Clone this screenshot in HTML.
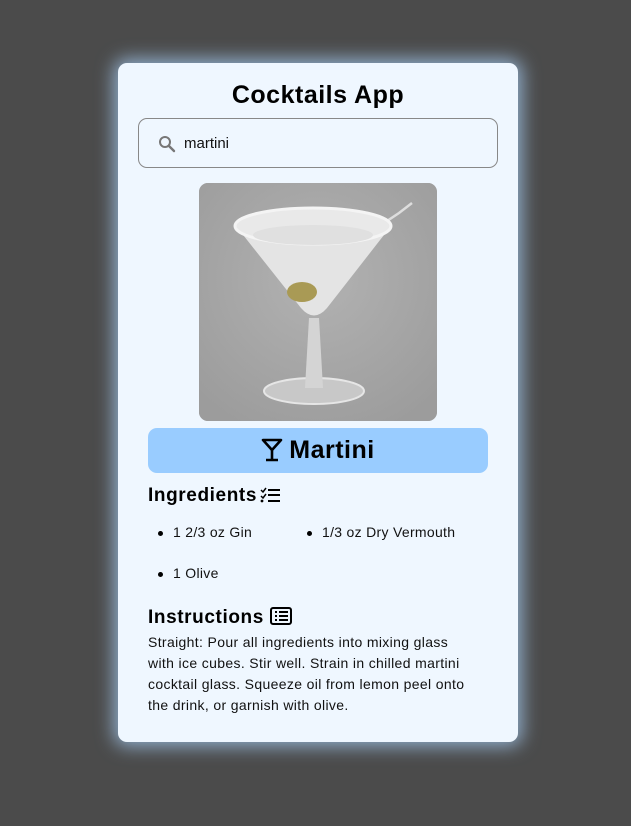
<!DOCTYPE html>
<html><head><style>
html,body{margin:0;width:631px;height:826px;background:#4b4b4b;overflow:hidden;font-family:"Liberation Sans",sans-serif}
.card{position:absolute;left:118px;top:63px;width:400px;height:679px;background:#eff7ff;border-radius:9px;box-shadow:0 0 18px 4px rgba(170,210,250,.75)}
h1{margin:0;position:absolute;top:18px;width:100%;text-align:center;font-size:25px;font-weight:bold;color:#000;letter-spacing:0.5px}
.search{position:absolute;left:20px;top:55px;width:360px;height:50px;border:1px solid #888;border-radius:9px;box-sizing:border-box}
.search span{position:absolute;left:45px;top:16px;font-size:15px;color:#111}
.img{position:absolute;left:81px;top:120px;width:238px;height:238px;border-radius:9px;overflow:hidden;background:#a9a9a9}
.title{position:absolute;left:30px;top:365px;width:340px;height:45px;background:#99ccff;border-radius:9px;text-align:center;font-size:25px;font-weight:bold;line-height:45px;letter-spacing:0.5px}
h2{position:absolute;margin:0;left:30px;font-size:19px;font-weight:bold;letter-spacing:0.6px}
.li{position:absolute;font-size:14px;color:#111;letter-spacing:0.3px}
.li:before{content:"";position:absolute;left:-15px;top:7px;width:5px;height:5px;border-radius:50%;background:#000}
.ins{position:absolute;left:30px;top:569px;width:360px;font-size:14px;line-height:21px;color:#111;white-space:nowrap;letter-spacing:0.35px}
</style></head><body>
<div class="card">
<h1>Cocktails App</h1>
<div class="search"><svg style="position:absolute;left:19px;top:16px" width="18" height="18" viewBox="0 0 18 18"><circle cx="7" cy="7" r="5" fill="none" stroke="#777" stroke-width="2"/><path d="M11 11l5 5" stroke="#777" stroke-width="2.4" stroke-linecap="round"/></svg><span>martini</span></div>
<div class="img"><svg width="238" height="238" viewBox="0 0 238 238">
<defs><radialGradient id="g" cx="50%" cy="40%" r="70%"><stop offset="0" stop-color="#b2b2b2"/><stop offset="1" stop-color="#9c9c9c"/></radialGradient></defs>
<rect width="238" height="238" fill="url(#g)"/>
<path d="M213 20L200 30 L140 70" stroke="#ddd" stroke-width="2.5"/>
<ellipse cx="115" cy="208" rx="50" ry="13" fill="#c8c8c8" stroke="#e6e6e6" stroke-width="2"/>
<path d="M110 135 L106 205 L124 205 L120 135Z" fill="#d4d4d4"/>
<path d="M37 43 Q115 60 192 43 L128 125 Q115 140 102 125Z" fill="#e4e4e4"/>
<ellipse cx="114" cy="43" rx="78" ry="18" fill="#e9e9e9" stroke="#f4f4f4" stroke-width="3"/>
<ellipse cx="114" cy="52" rx="60" ry="10" fill="#e0e0e0"/>
<ellipse cx="103" cy="109" rx="15" ry="10" fill="#a99a55"/>
</svg></div>
<div class="title"><svg style="vertical-align:-4px;margin-right:6px" width="22" height="24" viewBox="0 0 22 24"><path d="M2 2h18L11 12Z" fill="none" stroke="#000" stroke-width="2.6" stroke-linejoin="round"/><path d="M11 12v9M5 22h12" stroke="#000" stroke-width="2.6"/></svg>Martini</div>
<h2 style="top:422px">Ingredients <svg style="vertical-align:-2px;margin-left:-3px" width="21" height="16" viewBox="0 0 21 16"><path d="M1 3l2 2 3-4M1 9l2 2 3-4" stroke="#000" stroke-width="1.5" fill="none"/><circle cx="2" cy="14" r="1.4"/><path d="M8 3h12M8 8h12M8 14h12" stroke="#000" stroke-width="2"/></svg></h2>
<div class="li" style="left:55px;top:461px">1 2/3 oz Gin</div>
<div class="li" style="left:204px;top:461px">1/3 oz Dry Vermouth</div>
<div class="li" style="left:55px;top:502px">1 Olive</div>
<h2 style="top:544px">Instructions <svg style="vertical-align:-2px" width="22" height="18" viewBox="0 0 22 18"><rect x="1" y="1" width="20" height="16" rx="2" fill="none" stroke="#000" stroke-width="2"/><path d="M5 5h2M9 5h9M5 9h2M9 9h9M5 13h2M9 13h9" stroke="#000" stroke-width="2"/></svg></h2>
<div class="ins">Straight: Pour all ingredients into mixing glass<br>with ice cubes. Stir well. Strain in chilled martini<br>cocktail glass. Squeeze oil from lemon peel onto<br>the drink, or garnish with olive.</div>
</div>
</body></html>
